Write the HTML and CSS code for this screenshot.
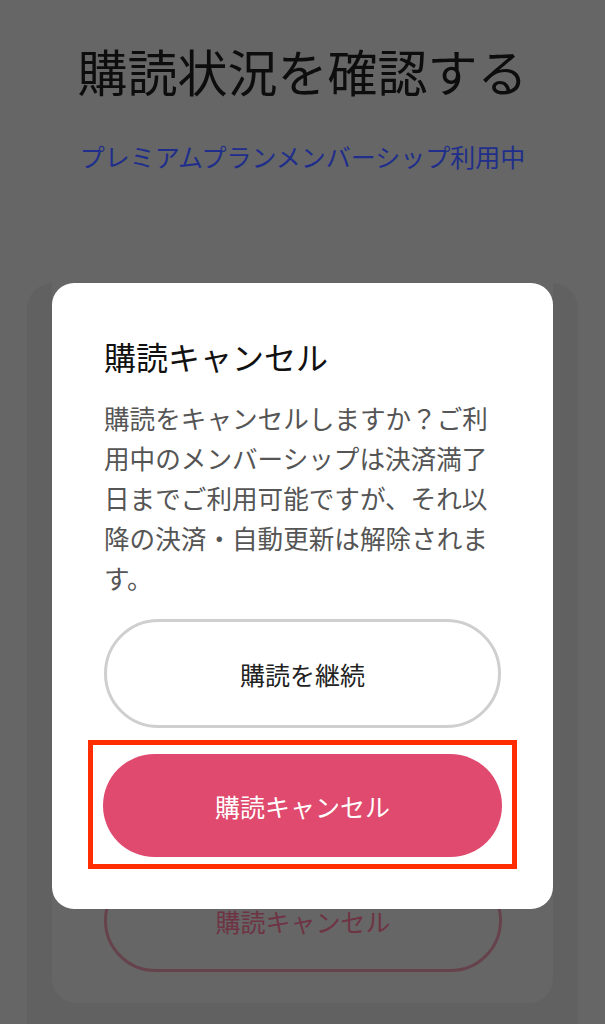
FILE: index.html
```html
<!DOCTYPE html>
<html lang="ja">
<head>
<meta charset="utf-8">
<title>購読状況を確認する</title>
<link rel="stylesheet" href="styles.css">
</head>
<body>
<main class="page">
  <h1 class="page-title">購読状況を確認する</h1>
  <p class="plan-status">プレミアムプランメンバーシップ利用中</p>
  <section class="sheet">
    <div class="sheet-card">
      <button class="btn btn-outline-dim" type="button">購読キャンセル</button>
    </div>
  </section>
</main>

<div class="backdrop">
  <div class="modal" role="dialog" aria-labelledby="modal-title">
    <h2 class="modal-title" id="modal-title">購読キャンセル</h2>
    <p class="modal-text">購読をキャンセルしますか？ご利用中のメンバーシップは決済満了日までご利用可能ですが、それ以降の決済・自動更新は解除されます。</p>
    <button class="btn btn-secondary" type="button">購読を継続</button>
    <div class="highlight">
      <button class="btn btn-primary" type="button">購読キャンセル</button>
    </div>
  </div>
</div>
</body>
</html>
```

FILE: styles.css
```css
* {
  box-sizing: border-box;
}

html, body {
  margin: 0;
  padding: 0;
}

body {
  background: #666666;
  font-family: "Noto Sans CJK JP", "Noto Sans", sans-serif;
  height: 1024px;
  overflow: hidden;
}

.page {
  display: flex;
  flex-direction: column;
  align-items: stretch;
  padding-top: 40px;
}

.page-title {
  margin: 0;
  font-size: 50px;
  line-height: 60px;
  font-weight: 400;
  color: #0d0d0d;
  text-align: center;
}

.plan-status {
  margin: 38px 0 0;
  font-size: 25px;
  line-height: 36px;
  color: #1f2e8a;
  text-align: center;
}

.sheet {
  margin: 109px 27px 0;
  padding: 0 25px;
  background: #616161;
  border-radius: 26px 26px 0 0;
  min-height: 760px;
}

.sheet-card {
  background: #666666;
  border-radius: 0 0 24px 24px;
  padding: 586px 51px 31px 52px;
}

.btn {
  display: flex;
  align-items: center;
  justify-content: center;
  width: 100%;
  margin: 0;
  font-family: inherit;
  font-size: 25px;
  font-weight: 400;
  border-radius: 999px;
  cursor: pointer;
}

.btn-outline-dim {
  height: 103px;
  background: transparent;
  border: 3px solid #66434c;
  color: #6e3444;
}

.backdrop {
  position: fixed;
  inset: 0;
  display: flex;
  justify-content: center;
  align-items: flex-start;
  padding-top: 283px;
}

.modal {
  width: 501px;
  background: #ffffff;
  border-radius: 22px;
  padding: 51px 52px 40px;
  display: flex;
  flex-direction: column;
}

.modal-title {
  margin: 0;
  font-size: 32px;
  line-height: 44px;
  font-weight: 400;
  color: #111111;
}

.modal-text {
  margin: 20px 0 0;
  font-size: 25.6px;
  line-height: 40px;
  color: #555555;
}

.btn-secondary {
  margin-top: 21px;
  height: 109px;
  background: #ffffff;
  border: 3px solid #cfcfcf;
  color: #222222;
}

.highlight {
  margin: 12px -16px 0;
  border: 5px solid #ff2d00;
  padding: 9px 10px 7px;
}

.btn-primary {
  height: 103px;
  background: #e04a6e;
  border: none;
  color: #ffffff;
}
```
